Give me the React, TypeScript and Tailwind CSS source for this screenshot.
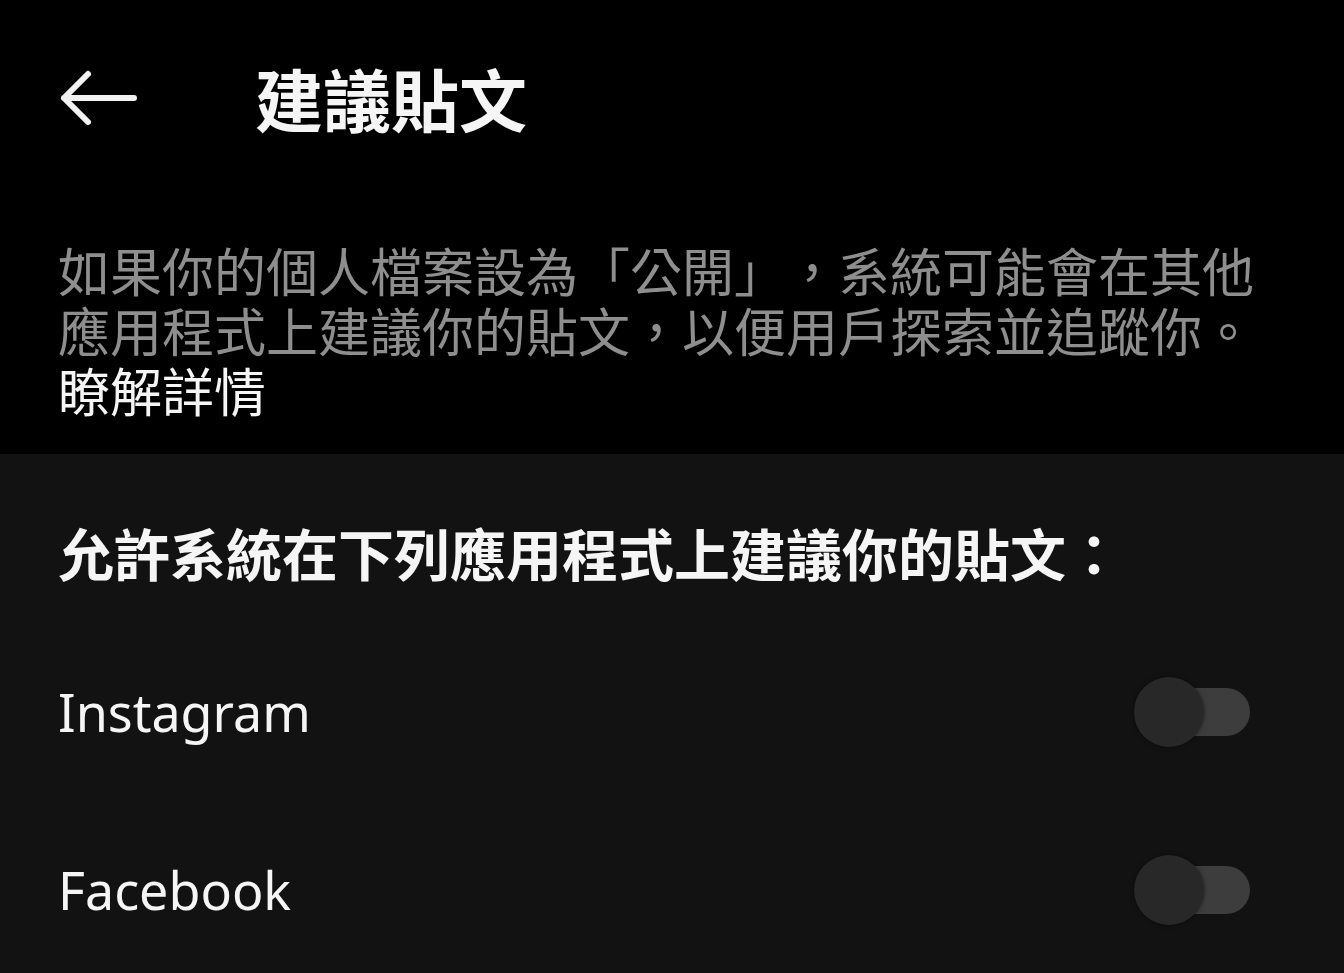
import React from "react";

const cjk = { fontFamily: '"Noto Sans CJK TC", "Noto Sans", sans-serif' };
const latin = { fontFamily: '"Noto Sans", "Noto Sans CJK TC", sans-serif' };

const Toggle = () => (
  <div className="relative h-[70px] w-[116px] shrink-0">
    <div className="absolute right-0 top-[11px] h-[48px] w-[80px] rounded-full bg-[#3d3d3d]" />
    <div className="absolute left-0 top-0 h-[70px] w-[70px] rounded-full bg-[#282828] shadow-[0_0_4px_rgba(0,0,0,0.5)]" />
  </div>
);

const apps = ["Instagram", "Facebook"];

export default function App() {
  return (
    <div
      className="flex min-h-[973px] w-[1344px] flex-col bg-[#121212] text-white [text-spacing-trim:space-all]"
      style={cjk}
    >
      <div className="bg-black">
        <div className="flex h-[196px] items-center px-[58px]">
          <svg width="80" height="60" viewBox="0 0 80 60" className="shrink-0">
            <path
              d="M76 30H6M30 6L6 30l24 24"
              fill="none"
              stroke="#f2f2f2"
              strokeWidth="6"
              strokeLinecap="round"
              strokeLinejoin="round"
            />
          </svg>
          <h1 className="ml-[117px] text-[68px] font-bold leading-none text-[#f5f5f5]">
            建議貼文
          </h1>
        </div>
        <div className="px-[58px] pt-[44px] pb-[34px] text-[52px] leading-[60px]">
          <p className="text-[#8e8e8e]">
            如果你的個人檔案設為「公開」，系統可能會在其他應用程式上建議你的貼文，以便用戶探索並追蹤你。
          </p>
          <p className="text-[#f5f5f5]">瞭解詳情</p>
        </div>
      </div>
      <div className="flex flex-col px-[58px] pt-[68px]">
        <h2 className="text-[56px] font-bold leading-[60px] text-[#f5f5f5]">
          允許系統在下列應用程式上建議你的貼文：
        </h2>
        <div className="mt-[41px] flex flex-col">
          {apps.map((a) => (
            <div key={a} className="flex h-[178px] items-center justify-between pr-[36px]">
              <span className="text-[52px] leading-none text-[#f5f5f5]" style={latin}>
                {a}
              </span>
              <Toggle />
            </div>
          ))}
        </div>
      </div>
    </div>
  );
}
